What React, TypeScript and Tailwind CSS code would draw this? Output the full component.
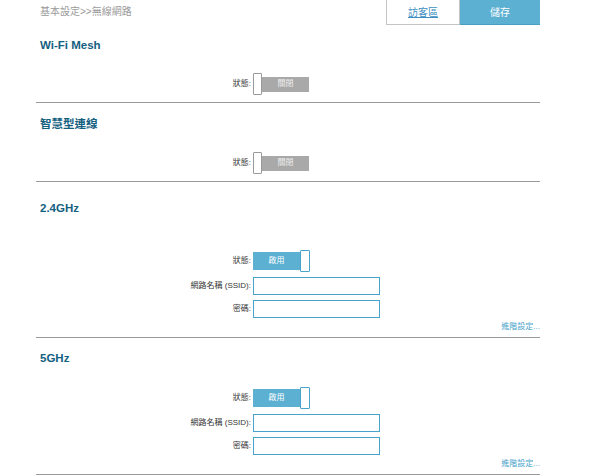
import React from "react"

const font = { fontFamily: '"Liberation Sans", "Noto Sans CJK TC", sans-serif' }

const Toggle = ({ on }: { on: boolean }) => {
  if (on) {
    return (
      <div className="flex items-center h-[22px]">
        <div className="w-[47px] h-[18px] bg-[#5cb0d1] flex items-center justify-center text-white text-[8px]">
          啟用
        </div>
        <div className="w-[10px] h-[22px] bg-white border border-[#4aa3cb] rounded-[1px]" />
      </div>
    )
  }
  return (
    <div className="flex items-center h-[22px]">
      <div className="w-[9px] h-[22px] bg-white border border-[#9a9a9a] rounded-[1px]" />
      <div className="w-[47px] h-[15px] bg-[#a9a9a9] flex items-center justify-center text-[#eeeeee] text-[8px]">
        關閉
      </div>
    </div>
  )
}

const Row = ({ label, children }: { label: string; children: React.ReactNode }) => (
  <div className="flex items-center">
    <div className="w-[217px] text-right text-[8px] text-[#333] pr-[2px]">{label}</div>
    {children}
  </div>
)

const Field = () => (
  <div className="w-[127px] h-[18px] border border-[#4aa3cb] bg-white" />
)

const Divider = () => <div className="h-px bg-[#9a9a9a]" />

const Heading = ({ children }: { children: React.ReactNode }) => (
  <div className="pl-1 h-4 flex items-center text-[11.5px] font-bold text-[#14607f]">
    {children}
  </div>
)

const Band = ({ title, top, gap }: { title: string; top: string; gap: string }) => (
  <div>
    <div className={top}>
      <Heading>{title}</Heading>
    </div>
    <div className={gap}>
      <Row label="狀態:">
        <Toggle on={false} />
      </Row>
    </div>
  </div>
)

const Radio = ({ title, top, gap }: { title: string; top: string; gap: string }) => (
  <div>
    <div className={top}>
      <Heading>{title}</Heading>
    </div>
    <div className={`${gap} flex flex-col`}>
      <Row label="狀態:">
        <Toggle on={true} />
      </Row>
      <div className="mt-[5px]">
        <Row label="網路名稱 (SSID):">
          <Field />
        </Row>
      </div>
      <div className="mt-[5px]">
        <Row label="密碼:">
          <Field />
        </Row>
      </div>
      <div className="flex justify-end h-[12px] mt-[3px] items-center text-[8px] text-[#4aa3cb]">
        進階設定...
      </div>
    </div>
  </div>
)

export default function App() {
  return (
    <div className="w-[600px] h-[476px] bg-white overflow-hidden" style={font}>
      <div className="ml-[36px] w-[504px]">
        <div className="flex h-[25px]">
          <div className="flex-1 pl-1 pt-[4px] text-[10px] text-[#9a9a9a]">基本設定&gt;&gt;無線網路</div>
          <div className="w-[74px] border-x border-b border-[#c4c4c4] flex items-center justify-center text-[10px] text-[#3d8fbf] underline">
            訪客區
          </div>
          <div className="w-[80px] bg-[#5cb0d1] border-b border-[#4aa0c4] flex items-center justify-center text-[10px] text-white">
            儲存
          </div>
        </div>

        <Band title="Wi-Fi Mesh" top="pt-[13px]" gap="pt-[19px] pb-[7px]" />
        <Divider />
        <Band title="智慧型連線" top="pt-[14px]" gap="pt-[19px] pb-[7px]" />
        <Divider />
        <Radio title="2.4GHz" top="pt-[19px]" gap="pt-[33px] pb-[4px]" />
        <Divider />
        <Radio title="5GHz" top="pt-[13px]" gap="pt-[20px] pb-[4px]" />
        <Divider />
      </div>
    </div>
  )
}
